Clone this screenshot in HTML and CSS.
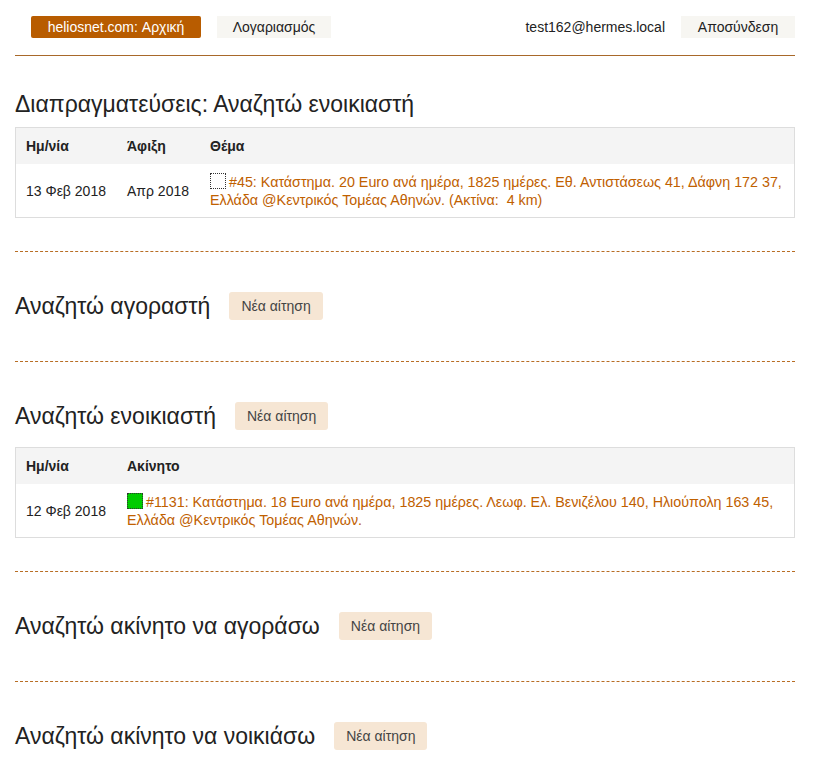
FILE: index.html
```html
<!DOCTYPE html>
<html lang="el">
<head>
    <meta charset="UTF-8">
    <meta name="viewport" content="width=device-width, initial-scale=1.0">
    <title>heliosnet.com</title>
    <link rel="stylesheet" href="styles.css">
</head>
<body>

    <div class="page">
        <div class="topbar">
            <a class="nav-home" href="#">heliosnet.com: Αρχική</a>
            <a class="nav-btn" href="#">Λογαριασμός</a>
            <span class="spacer"></span>
            <span class="user">test162@hermes.local</span>
            <a class="nav-btn" href="#">Αποσύνδεση</a>
        </div>

        <div class="section first">
            <h2 class="title">Διαπραγματεύσεις: Αναζητώ ενοικιαστή</h2>
            <table class="list">
                <tr>
                    <th class="col-date">Ημ/νία</th>
                    <th class="col-arr">Άφιξη</th>
                    <th>Θέμα</th>
                </tr>
                <tr>
                    <td>13 Φεβ 2018</td>
                    <td>Απρ 2018</td>
                    <td class="subject"><span class="mark"></span> <a href="#">#45: Κατάστημα. 20 Euro ανά ημέρα, 1825 ημέρες. Εθ. Αντιστάσεως 41, Δάφνη 172 37, Ελλάδα @Κεντρικός Τομέας Αθηνών. (Ακτίνα:&nbsp; 4 km)</a></td>
                </tr>
            </table>
        </div>

        <div class="section">
            <div class="head">
                <h2>Αναζητώ αγοραστή</h2>
                <a class="new-btn" href="#">Νέα αίτηση</a>
            </div>
        </div>

        <div class="section">
            <div class="head with-table">
                <h2>Αναζητώ ενοικιαστή</h2>
                <a class="new-btn" href="#">Νέα αίτηση</a>
            </div>
            <table class="list">
                <tr>
                    <th class="col-date">Ημ/νία</th>
                    <th>Ακίνητο</th>
                </tr>
                <tr>
                    <td>12 Φεβ 2018</td>
                    <td class="subject"><span class="mark green"></span> <a href="#">#1131: Κατάστημα. 18 Euro ανά ημέρα, 1825 ημέρες. Λεωφ. Ελ. Βενιζέλου 140, Ηλιούπολη 163 45, Ελλάδα @Κεντρικός Τομέας Αθηνών.</a></td>
                </tr>
            </table>
        </div>

        <div class="section">
            <div class="head">
                <h2>Αναζητώ ακίνητο να αγοράσω</h2>
                <a class="new-btn" href="#">Νέα αίτηση</a>
            </div>
        </div>

        <div class="section last">
            <div class="head">
                <h2>Αναζητώ ακίνητο να νοικιάσω</h2>
                <a class="new-btn" href="#">Νέα αίτηση</a>
            </div>
        </div>
    </div>

</body>
</html>
```

FILE: styles.css
```css
body {
    margin: 0;
    font-family: "Liberation Sans", Arial, sans-serif;
    font-size: 14px;
    color: #222;
    background-color: #fff;
}

a {
    text-decoration: none;
}

.page {
    padding: 0 29px 0 15px;
}

.topbar {
    display: flex;
    align-items: center;
    padding: 16px 0 17px 16px;
    border-bottom: 1px solid #a8682a;
}

.nav-home {
    display: block;
    width: 170px;
    height: 22px;
    line-height: 22px;
    text-align: center;
    background-color: #b85c00;
    color: #fff;
    border-radius: 2px;
}

.nav-btn {
    display: block;
    width: 114px;
    height: 22px;
    line-height: 22px;
    text-align: center;
    background-color: #f7f6f2;
    color: #222;
    margin-left: 16px;
}

.spacer {
    flex: 1;
}

.user {
    color: #222;
}

.section {
    padding: 40px 0 33px;
    border-bottom: 1px dashed #b86d24;
}

.section.first {
    padding-top: 35px;
}

.section.last {
    border-bottom: none;
}

.title {
    margin: 0 0 10px;
    font-size: 23px;
    font-weight: normal;
    line-height: 26px;
}

.head {
    display: flex;
    align-items: center;
    margin-bottom: 8px;
}

.head.with-table {
    margin-bottom: 17px;
}

.head h2 {
    margin: 0 19px 0 0;
    font-size: 23px;
    font-weight: normal;
    line-height: 28px;
}

.new-btn {
    display: block;
    height: 28px;
    line-height: 28px;
    padding: 0 12px;
    background-color: #f6e6d4;
    color: #444;
    font-size: 14px;
    border-radius: 3px;
}

.list {
    width: 100%;
    border-collapse: collapse;
    border: 1px solid #ddd;
    font-size: 14px;
}

.list th {
    text-align: left;
    font-weight: bold;
    background-color: #f4f4f4;
    height: 36px;
    padding: 0 10px;
}

.list td {
    padding: 9px 10px 8px;
    line-height: 18px;
    vertical-align: middle;
}

.list td.subject {
    font-size: 14.3px;
}

.list td a {
    color: #c06000;
}

.col-date {
    width: 81px;
}

.col-arr {
    width: 63px;
}

.mark {
    display: inline-block;
    width: 14px;
    height: 14px;
    border: 1px dotted #333;
    vertical-align: -2px;
    margin-right: -1px;
}

.mark.green {
    background-color: #00cc00;
}
```
